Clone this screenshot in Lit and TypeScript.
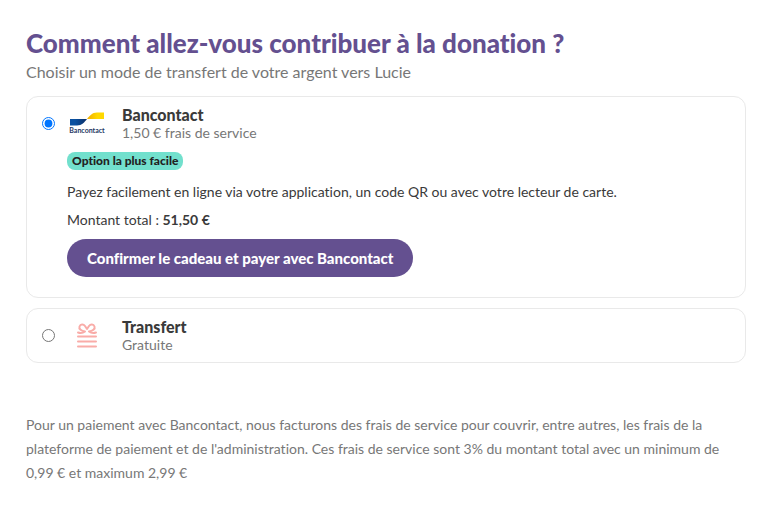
import { LitElement, html, css, svg } from "lit";
import { customElement, state } from "lit/decorators.js";

const bancontactLogo = html`
  <svg class="logo" viewBox="0 0 36 24" role="img" aria-label="Bancontact">
    <defs>
      <linearGradient id="blue" x1="0" x2="1">
        <stop offset="0.3" stop-color="#0a50a0" />
        <stop offset="1" stop-color="#0b2f66" />
      </linearGradient>
      <linearGradient id="yellow" x1="0" x2="1">
        <stop offset="0" stop-color="#f0ac00" />
        <stop offset="0.6" stop-color="#ffd800" />
      </linearGradient>
    </defs>
    <path fill="url(#blue)" d="M1 7H18C15.500 10 13 13.500 8 13.500H1Z" />
    <path fill="url(#yellow)" d="M18 7C20.500 4 23 .5 28 .5H35V7Z" />
    <text class="logo-text" x="18" y="21" text-anchor="middle">Bancontact</text>
  </svg>
`;

const giftIcon = html`
  <svg class="gift" viewBox="0 0 20 24" aria-hidden="true">
    ${svg`
      <path d="M1 8.500C3.500 9.300 6 9 8 7.500C4.500 7 1.500 5 2.500 2.500C3.500 0 6.500 0 8 2L10 5L12 2C13.500 0 16.500 0 17.500 2.500C18.500 5 15.500 7 12 7.500C14 9 16.500 9.300 19 8.500" />
      <path d="M1 12.500H19M1 17.500H19M1 22.500H19" />
    `}
  </svg>
`;

@customElement("app-root")
export class AppRoot extends LitElement {
  @state() private method = "bancontact";

  static styles = css`
    :host {
      display: block;
      padding: 27px 23px 20px 26px;
      background: #fff;
      color: #3a3a3a;
      font: 14px/20px Lato, "Open Sans", sans-serif;
      font-variant-ligatures: none;
    }
    * {
      box-sizing: border-box;
    }
    h1 {
      margin: 0;
      color: #645090;
      font-size: 26px;
      line-height: 32px;
      font-weight: 900;
    }
    p {
      margin: 0;
    }
    .intro {
      margin-bottom: 12px;
      color: #777;
      font-size: 16px;
      line-height: 25px;
    }
    .card {
      margin-bottom: 10px;
      padding: 9px 15px;
      border: 1px solid #e9e9e9;
      border-radius: 12px;
    }
    .card.open {
      padding-bottom: 20px;
    }
    .option {
      display: grid;
      grid-template-columns: 13px 40px 1fr;
      column-gap: 12px;
      align-items: center;
      min-height: 35px;
    }
    .option input {
      width: 13px;
      height: 13px;
      margin: 0;
    }
    .picture {
      display: flex;
      justify-content: center;
    }
    .logo {
      width: 36px;
      height: 24px;
    }
    .logo-text {
      fill: #1e3764;
      font-size: 7px;
      font-weight: 700;
    }
    .gift {
      width: 20px;
      height: 24px;
      overflow: visible;
      fill: none;
      stroke: #f9aca8;
      stroke-width: 2;
      stroke-linecap: round;
      stroke-linejoin: round;
    }
    .label {
      padding-left: 3px;
      color: #777;
      line-height: 17px;
    }
    .name {
      display: block;
      color: #3a3a3a;
      font-size: 16px;
      line-height: 18px;
      font-weight: 900;
    }
    .details {
      display: flex;
      flex-direction: column;
      align-items: flex-start;
      gap: 8px;
      padding: 11px 0 0 25px;
    }
    .badge {
      margin-bottom: 4px;
      padding: 0 5px;
      border-radius: 8px;
      background: #72e0cd;
      color: #222;
      font-size: 12px;
      line-height: 18px;
      font-weight: 900;
    }
    button {
      height: 38px;
      margin-top: 1px;
      padding: 0 20px;
      border: 0;
      border-radius: 20px;
      background: #645090;
      color: #fff;
      font: 900 15px/20px Lato, "Open Sans", sans-serif;
      font-variant-ligatures: none;
      cursor: pointer;
    }
    .note {
      margin-top: 50px;
      color: #777;
      line-height: 24px;
    }
  `;

  private choose(method: string) {
    this.method = method;
  }

  render() {
    return html`
      <main>
        <h1>Comment allez-vous contribuer à la donation ?</h1>
        <p class="intro">Choisir un mode de transfert de votre argent vers Lucie</p>
        <section class="card open">
          <label class="option">
            <input type="radio" name="method" .checked=${this.method === "bancontact"} @change=${() => this.choose("bancontact")} />
            <span class="picture">${bancontactLogo}</span>
            <span class="label"><span class="name">Bancontact</span>1,50 € frais de service</span>
          </label>
          <div class="details">
            <span class="badge">Option la plus facile</span>
            <p>Payez facilement en ligne via votre application, un code QR ou avec votre lecteur de carte.</p>
            <p>Montant total : <strong>51,50 €</strong></p>
            <button type="button">Confirmer le cadeau et payer avec Bancontact</button>
          </div>
        </section>
        <section class="card">
          <label class="option">
            <input type="radio" name="method" .checked=${this.method === "transfert"} @change=${() => this.choose("transfert")} />
            <span class="picture">${giftIcon}</span>
            <span class="label"><span class="name">Transfert</span>Gratuite</span>
          </label>
        </section>
        <p class="note">
          Pour un paiement avec Bancontact, nous facturons des frais de service pour couvrir, entre autres, les frais de la
          plateforme de paiement et de l'administration. Ces frais de service sont 3% du montant total avec un minimum de
          0,99 € et maximum 2,99 €
        </p>
      </main>
    `;
  }
}
